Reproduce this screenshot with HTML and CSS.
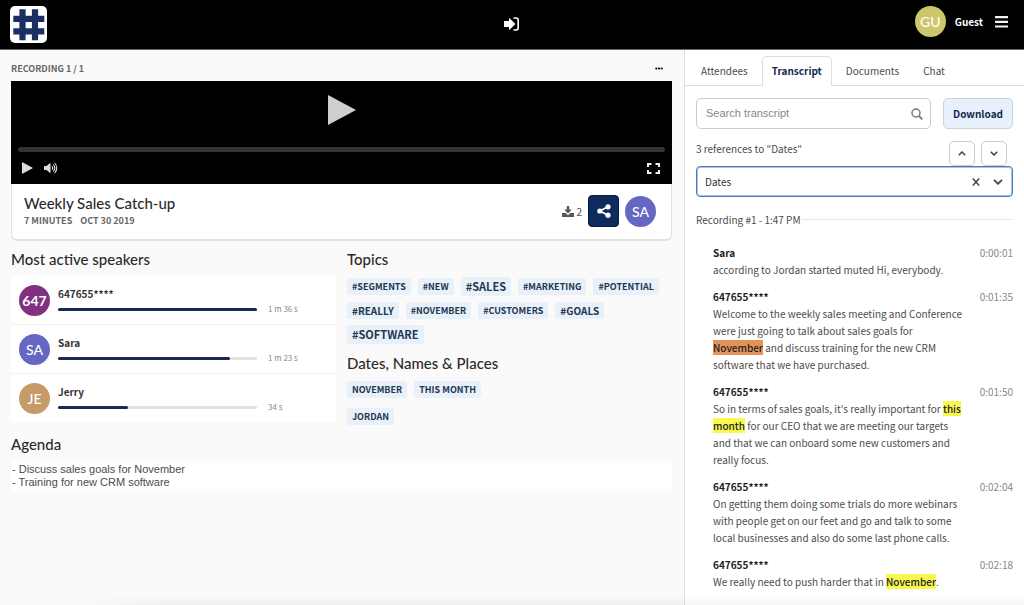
FILE: index.html
```html
<!DOCTYPE html>
<html lang="en">
<head>
<meta charset="utf-8">
<meta name="viewport" content="width=device-width, initial-scale=1">
<title>Weekly Sales Catch-up</title>
<link rel="stylesheet" href="styles.css">
</head>
<body>
<div class="app">
  <header class="topbar">
    <a class="logo" href="#" aria-label="Home">
      <svg viewBox="0 0 37 37" width="37" height="37"><rect width="37" height="37" rx="5" fill="#fff"/><path fill="none" stroke="#1b2f63" stroke-width="6.200" d="M12.500 3.300v31M25 3.300v31M3.300 12.800h31M3.300 25.300h31"/></svg>
    </a>
    <button class="icon-btn enter" type="button" aria-label="Join">
      <svg viewBox="0 0 16 14" width="16" height="14"><path fill="#fff" d="M0 4h5V.8L11.500 7 5 13.200V10H0z"/><path d="M9.500 1H12a2.200 2.200 0 0 1 2.200 2.200v7.600A2.200 2.200 0 0 1 12 13H9.500" fill="none" stroke="#fff" stroke-width="1.600"/></svg>
    </button>
    <div class="account">
      <span class="avatar avatar-guest">GU</span>
      <span class="account-name">Guest</span>
      <button class="icon-btn" type="button" aria-label="Menu">
        <svg viewBox="0 0 13 12" width="13" height="12"><path fill="#f2f2f2" d="M0 0h13v2.200H0zM0 4.700h13v2.200H0zM0 9.400h13v2.200H0z"/></svg>
      </button>
    </div>
  </header>

  <div class="columns">
    <main class="main">
      <div class="rec-head">
        <span>RECORDING 1 / 1</span>
        <button class="icon-btn more" type="button" aria-label="More">
          <svg viewBox="0 0 8 3" width="8" height="3"><circle cx="1.300" cy="1.500" r="1.100"/><circle cx="4" cy="1.500" r="1.100"/><circle cx="6.700" cy="1.500" r="1.100"/></svg>
        </button>
      </div>

      <section class="card">
        <div class="player">
          <button class="icon-btn big-play" type="button" aria-label="Play recording">
            <svg viewBox="0 0 28 30" width="28" height="30"><path fill="#cfcfcf" d="M0 0l28 15L0 30z"/></svg>
          </button>
          <div class="track"></div>
          <div class="controls">
            <button class="icon-btn" type="button" aria-label="Play">
              <svg viewBox="0 0 11 12" width="11" height="12"><path fill="#dcdcdc" d="M0 0l11 6L0 12z"/></svg>
            </button>
            <button class="icon-btn" type="button" aria-label="Volume">
              <svg viewBox="0 0 14 12" width="14" height="12"><path fill="#dcdcdc" d="M0 4h2.500L6.500.8v10.400L2.500 8H0z"/><path fill="none" stroke="#dcdcdc" stroke-width="1.100" d="M8 4.300q1.400 1.700 0 3.400M9.300 2.600q3 3.400 0 6.800M10.700 1q4.200 5 0 10"/></svg>
            </button>
            <button class="icon-btn full" type="button" aria-label="Full screen">
              <svg viewBox="0 0 13 11" width="13" height="11"><path fill="none" stroke="#eee" stroke-width="2" d="M1 4V1h3.500M8.500 1H12v3M12 7v3H8.500M4.500 10H1V7"/></svg>
            </button>
          </div>
        </div>
        <div class="info">
          <div class="info-text">
            <h1 class="title">Weekly Sales Catch-up</h1>
            <p class="meta"><span>7 MINUTES</span><span>OCT 30 2019</span></p>
          </div>
          <div class="downloads">
            <svg viewBox="0 0 12 11" width="12" height="11"><path fill="#555" d="M4.800 0h2.400v3.600h2.600L6 7.400 2.200 3.600h2.600zM0 7h3.600L6 9.200 8.400 7H12v4H0z"/></svg>
            <span>2</span>
          </div>
          <button class="share" type="button" aria-label="Share">
            <svg viewBox="0 0 14 14" width="14" height="14"><g fill="#fff"><circle cx="2.800" cy="7" r="2.600"/><circle cx="11" cy="2.800" r="2.600"/><circle cx="11" cy="11.200" r="2.600"/></g><path d="M11 2.800L2.800 7l8.200 4.200" fill="none" stroke="#fff" stroke-width="1.800"/></svg>
          </button>
          <span class="avatar avatar-sa">SA</span>
        </div>
      </section>

      <div class="insights">
        <section>
          <h2 class="heading">Most active speakers</h2>
          <ul class="speakers">
            <li class="speaker"><span class="avatar avatar-647">647</span><div class="talk"><span class="name">647655****</span><div class="bar"><div class="fill" style="width:100%"></div></div></div><span class="time">1 m 36 s</span></li>
            <li class="speaker"><span class="avatar avatar-sa">SA</span><div class="talk"><span class="name">Sara</span><div class="bar"><div class="fill" style="width:86.500%"></div></div></div><span class="time">1 m 23 s</span></li>
            <li class="speaker"><span class="avatar avatar-je">JE</span><div class="talk"><span class="name">Jerry</span><div class="bar"><div class="fill" style="width:35.400%"></div></div></div><span class="time">34 s</span></li>
          </ul>
        </section>
        <section>
          <h2 class="heading">Topics</h2>
          <div class="tags">
            <a class="tag" href="#">#SEGMENTS</a><a class="tag" href="#">#NEW</a><a class="tag tag-l" href="#">#SALES</a><a class="tag" href="#">#MARKETING</a><a class="tag" href="#">#POTENTIAL</a>
            <a class="tag tag-m" href="#">#REALLY</a><a class="tag" href="#">#NOVEMBER</a><a class="tag" href="#">#CUSTOMERS</a><a class="tag tag-m" href="#">#GOALS</a>
            <a class="tag tag-l" href="#">#SOFTWARE</a>
          </div>
          <h2 class="heading heading-next">Dates, Names &amp; Places</h2>
          <div class="tags"><a class="tag" href="#">NOVEMBER</a><a class="tag" href="#">THIS MONTH</a></div>
          <div class="tags tags-names"><a class="tag" href="#">JORDAN</a></div>
        </section>
      </div>

      <section>
        <h2 class="heading heading-next">Agenda</h2>
        <p class="agenda">- Discuss sales goals for November<br>- Training for new CRM software</p>
      </section>
    </main>

    <aside class="side">
      <nav class="tabs">
        <button class="tab" type="button">Attendees</button>
        <button class="tab tab-on" type="button">Transcript</button>
        <button class="tab" type="button">Documents</button>
        <button class="tab" type="button">Chat</button>
      </nav>
      <div class="panel">
        <div class="search-row">
          <label class="search">
            <input class="search-input" type="text" placeholder="Search transcript" aria-label="Search transcript">
            <svg viewBox="0 0 12 12" width="12" height="12"><circle cx="5" cy="5" r="4" fill="none" stroke="#777" stroke-width="1.400"/><path d="M8 8l3.300 3.300" stroke="#777" stroke-width="1.800"/></svg>
          </label>
          <button class="download" type="button">Download</button>
        </div>
        <div class="refs">
          <span class="refs-text">3 references to "Dates"</span>
          <button class="step" type="button" aria-label="Previous"><svg viewBox="0 0 8 5" width="8" height="5"><path d="M.8 4.300L4 1l3.200 3.300" fill="none" stroke="#444" stroke-width="1.500"/></svg></button>
          <button class="step" type="button" aria-label="Next"><svg viewBox="0 0 8 5" width="8" height="5"><path d="M.8.7L4 4 7.200.7" fill="none" stroke="#444" stroke-width="1.500"/></svg></button>
        </div>
        <div class="picker">
          <select class="picker-select" aria-label="Reference type"><option>Dates</option></select>
          <button class="icon-btn" type="button" aria-label="Clear"><svg viewBox="0 0 8 8" width="8" height="8"><path d="M.8.6l6.400 6.800M7.200.6L.8 7.400" stroke="#444" stroke-width="1.500"/></svg></button>
          <svg viewBox="0 0 10 6" width="10" height="6"><path d="M1 .8l4 4 4-4" fill="none" stroke="#444" stroke-width="1.800"/></svg>
        </div>
        <div class="divider">Recording #1 - 1:47 PM</div>
        <ol class="lines">
          <li class="line"><div class="said"><h3 class="who">Sara</h3><p class="words">according to Jordan started muted Hi, everybody.</p></div><time class="stamp">0:00:01</time></li>
          <li class="line"><div class="said"><h3 class="who">647655****</h3><p class="words">Welcome to the weekly sales meeting and Conference were just going to talk about sales goals for <mark class="hit hit-on">November</mark> and discuss training for the new CRM software that we have purchased.</p></div><time class="stamp">0:01:35</time></li>
          <li class="line"><div class="said"><h3 class="who">647655****</h3><p class="words">So in terms of sales goals, it's really important for <mark class="hit">this month</mark> for our CEO that we are meeting our targets and that we can onboard some new customers and really focus.</p></div><time class="stamp">0:01:50</time></li>
          <li class="line"><div class="said"><h3 class="who">647655****</h3><p class="words">On getting them doing some trials do more webinars with people get on our feet and go and talk to some local businesses and also do some last phone calls.</p></div><time class="stamp">0:02:04</time></li>
          <li class="line"><div class="said"><h3 class="who">647655****</h3><p class="words">We really need to push harder that in <mark class="hit">November</mark>.</p></div><time class="stamp">0:02:18</time></li>
        </ol>
      </div>
    </aside>
  </div>
</div>
</body>
</html>
```

FILE: styles.css
```css
* { box-sizing: border-box; }
body {
  margin: 0;
  background: #fafafa;
  color: #4c4c4c;
  font: 10px/17px "Noto Sans CJK SC", "Open Sans", sans-serif;
}
h1, h2, h3, p, ul, ol { margin: 0; padding: 0; }
ul, ol { list-style: none; }
a { color: inherit; text-decoration: none; }
svg { display: block; flex: none; }
button, input, select { font: inherit; color: inherit; margin: 0; }
.icon-btn { padding: 0; border: 0; background: none; }

.app { display: flex; flex-direction: column; min-height: 100vh; }
.app::after {
  content: "";
  position: fixed;
  left: 80px;
  right: 0;
  bottom: 0;
  height: 10px;
  background: linear-gradient(transparent, rgba(0, 0, 0, 0.04));
  mask-image: linear-gradient(to right, transparent, #000 80px);
  pointer-events: none;
}

/* Top bar */
.topbar {
  display: grid;
  grid-template-columns: 1fr auto 1fr;
  align-items: center;
  height: 50px;
  padding: 0 10px;
  background: #000;
  border-bottom: 1px solid #666;
}
.logo { justify-self: start; }
.enter { padding-bottom: 2px; }
.account { display: flex; align-items: center; justify-content: flex-end; padding: 0 6px 6px 0; }
.account-name { margin: 0 12px 0 9px; color: #fff; font-weight: 700; }
.avatar {
  display: flex;
  flex: none;
  align-items: center;
  justify-content: center;
  width: 31px;
  height: 31px;
  border-radius: 50%;
  color: #fff;
  font: 500 14px/17px Lato, sans-serif;
}
.avatar-guest { background: #cbc76a; }
.avatar-sa { background: #6667c4; }
.avatar-647 { background: #80317f; font-weight: 700; }
.avatar-je { background: #c79a69; }

.columns { display: flex; flex: 1; }
.main { flex: 1; min-width: 0; padding: 0 12px 0 11px; }

/* Recording card */
.rec-head {
  display: flex;
  align-items: center;
  justify-content: space-between;
  height: 31px;
  padding: 5px 9px 0 0;
  font-size: 9px;
  font-weight: 700;
  color: #666;
}
.card {
  border: 1px solid #e2e2e2;
  border-width: 0 1px 2px;
  border-radius: 0 0 6px 6px;
  background: #fff;
}
.player { margin: 0 -1px; padding: 14px 7px 9px; background: #000; }
.big-play { display: block; margin: 0 auto; }
.track { height: 5px; margin: 22px 0 9px; border-radius: 3px; background: #333; }
.controls { display: flex; align-items: center; gap: 11px; height: 14px; padding: 0 5px 0 4px; }
.full { margin-left: auto; }
.info { display: flex; align-items: center; padding: 9px 15px 10px 12px; }
.info-text { flex: 1; }
.title { color: #2b2b2b; font: 500 15px/20px Lato, sans-serif; }
.meta { display: flex; gap: 8px; font-size: 9px; font-weight: 700; line-height: 16px; color: #666; }
.downloads { display: flex; align-items: center; gap: 2px; }
.share {
  display: flex;
  align-items: center;
  justify-content: center;
  width: 31px;
  height: 32px;
  margin: 0 6px;
  padding: 0;
  border: 1px solid #071d42;
  border-radius: 4px;
  background: #0d2b5c;
}

/* Insights */
.insights { display: grid; grid-template-columns: 1fr 1fr; gap: 11px; }
.heading { padding-top: 8px; color: #2b2b2b; font: 500 15px/20px Lato, sans-serif; }
.heading-next { padding-top: 9px; }
.speakers { margin-top: 7px; background: #f0f0f0; }
.speaker { display: flex; align-items: center; height: 48px; padding: 0 12px 0 8px; background: #fff; }
.speaker + .speaker { margin-top: 1px; }
.talk { flex: 1; margin: 0 11px 0 8px; }
.name { display: block; line-height: 18px; font-weight: 700; color: #333; }
.bar { height: 3px; margin: 5px 0; border-radius: 2px; background: #e2e2e2; }
.fill { height: 3px; border-radius: 2px; background: #1a2a50; }
.time { align-self: flex-end; width: 56px; padding-bottom: 7px; font-size: 8px; color: #888; }
.tags { display: flex; flex-wrap: wrap; align-items: center; gap: 6px 7px; margin-top: 8px; }
.tags-names { margin-top: 10px; }
.tag {
  padding: 0 5px;
  border-radius: 2px;
  background: #e8f1fa;
  color: #22364f;
  font-size: 9px;
  font-weight: 700;
}
.tag-m { font-size: 10px; }
.tag-l { font-size: 11px; line-height: 19px; }
.agenda {
  margin-top: 7px;
  padding: 2px 1px;
  background: #fff;
  font: 11px/13px "Liberation Sans", Arial, sans-serif;
}

/* Side panel */
.side { flex: none; width: 340px; border-left: 1px solid #ddd; background: #fff; }
.tabs { display: flex; align-items: flex-end; height: 36px; padding-left: 4px; border-bottom: 1px solid #ddd; }
.tab { height: 30px; margin-bottom: -1px; padding: 0 12px 2px; border: 0; background: none; }
.tab-on {
  margin: 0 2px -1px;
  padding: 0 9px 2px;
  border: 1px solid #ddd;
  border-bottom-color: #fff;
  border-radius: 5px 5px 0 0;
  background: #fff;
  color: #14284f;
  font-weight: 700;
}
.panel { padding: 12px 11px 12px; }
.search-row { display: flex; gap: 12px; }
.search {
  display: flex;
  flex: 1;
  align-items: center;
  height: 31px;
  padding: 0 7px 0 9px;
  border: 1px solid #ccc;
  border-radius: 5px;
}
.search-input { flex: 1; min-width: 0; padding: 0; border: 0; outline: 0; background: none; font: 11px/17px "Liberation Sans", Arial, sans-serif; }
.search-input::placeholder { color: #888; }
.download {
  width: 70px;
  padding: 0;
  border: 1px solid #ccd3dc;
  border-radius: 5px;
  background: #e8f1fb;
  color: #14284f;
  font-weight: 700;
}
.refs { display: flex; gap: 6px; margin-top: 12px; padding-right: 6px; }
.refs-text { flex: 1; line-height: 16px; }
.step {
  display: flex;
  align-items: center;
  justify-content: center;
  width: 26px;
  height: 25px;
  padding: 0;
  border: 1px solid #ccc;
  border-radius: 5px;
  background: #fff;
}
.picker {
  display: flex;
  align-items: center;
  gap: 13px;
  height: 31px;
  padding: 0 9px 0 8px;
  border: 1px solid #4a7ebb;
  border-radius: 4px;
  box-shadow: inset 0 0 0 1px #a9c3e3;
}
.picker-select { flex: 1; appearance: none; padding: 0; border: 0; outline: 0; background: none; color: #333; }
.divider { display: flex; align-items: center; gap: 1px; margin-top: 14px; }
.divider::after { content: ""; flex: 1; height: 1px; background: #e6e6e6; }
.lines { margin: 17px 0 0 17px; }
.line { display: flex; justify-content: space-between; margin-bottom: 11px; }
.said { flex: 0 1 250px; }
.who { font-size: 10px; line-height: 16px; font-weight: 700; color: #222; }
.stamp { line-height: 16px; color: #888; }
.hit { background: #f8f84f; color: #222; font-weight: 500; }
.hit-on { background: #e2935a; }
```
